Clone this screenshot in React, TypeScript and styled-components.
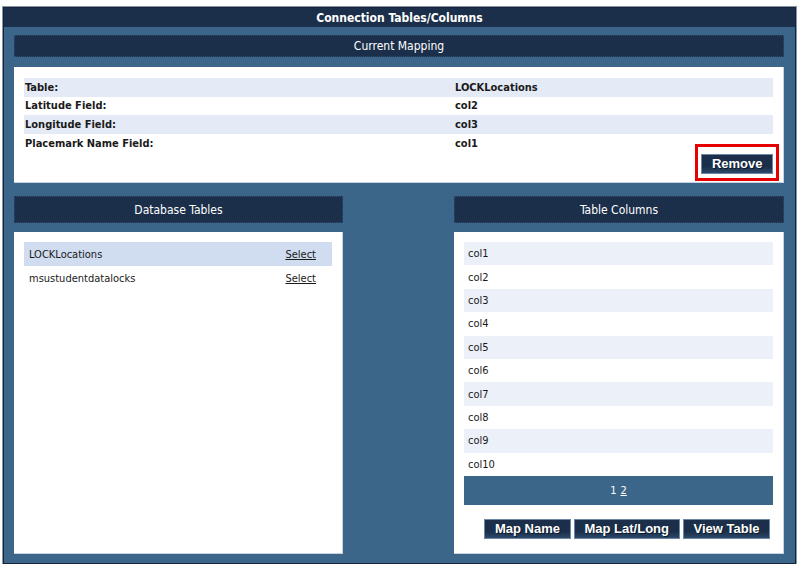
import styled, { createGlobalStyle } from "styled-components";

const GlobalStyle = createGlobalStyle`
    body {
        margin: 0;
        background: #ffffff;
        font-family: "DejaVu Sans Condensed", "DejaVu Sans", sans-serif;
    }
`;

const navy = "#1b2f4a";
const steel = "#3b6689";

const Window = styled.div`
    margin: 7px 0 0 3px;
    width: 793px;
    height: 557px;
    box-sizing: border-box;
    border: 1px solid #14243a;
    box-shadow: 0 0 0 1px #8a96a4;
    background: ${steel};
    display: flex;
    flex-direction: column;
`;

const TitleBar = styled.div`
    height: 19px;
    background: ${navy};
    color: #fff;
    font-weight: bold;
    font-size: 12px;
    display: flex;
    align-items: center;
    justify-content: center;
`;

const Body = styled.div`
    flex: 1;
    padding: 8px 11px 0 10px;
    display: flex;
    flex-direction: column;
`;

const Header = styled.div<{ $h?: number }>`
    height: ${({ $h }) => $h ?? 22}px;
    box-sizing: border-box;
    background: ${navy};
    border: 1px dotted #2f4d6e;
    color: #fff;
    font-size: 12px;
    display: flex;
    align-items: center;
    justify-content: center;
`;

const Panel = styled.div`
    background: #fff;
    box-sizing: border-box;
    padding: 10px;
    border-right: 1px solid #c7d3e0;
    border-bottom: 1px solid #c7d3e0;
`;

const MappingPanel = styled(Panel)`
    margin-top: 10px;
    height: 116px;
    padding-top: 11px;
`;

const MapRow = styled.div<{ $alt?: boolean }>`
    height: 18.6px;
    display: flex;
    align-items: center;
    background: ${({ $alt }) => ($alt ? "#e4eaf6" : "#fff")};
    font-size: 11px;
    font-weight: bold;
    color: #1a1a1a;
`;

const MapLabel = styled.span`
    width: 430px;
    padding-left: 1px;
`;

const RemoveRow = styled.div`
    display: flex;
    justify-content: flex-end;
    margin: -8px -6px 0 0;
`;

const Highlight = styled.div`
    border: 3px solid #e60000;
    padding: 6px 3px 4px 3px;
`;

const Button = styled.button`
    height: 20px;
    box-sizing: border-box;
    padding: 0 9.5px;
    background: linear-gradient(to bottom, ${navy} 0%, ${navy} 65%, #2c4868 100%);
    border: 1px solid #6d88a6;
    color: #fff;
    font-family: "Liberation Sans", Arial, sans-serif;
    font-weight: bold;
    font-size: 13px;
    line-height: 18px;
    text-shadow: 1px 1px 0 #0d1a2a;
    cursor: pointer;
`;

const Columns = styled.div`
    margin-top: 13px;
    display: grid;
    grid-template-columns: 329px 1fr 330px;
    flex: 1;
    padding-bottom: 9px;
`;

const Column = styled.div<{ $col: number }>`
    grid-column: ${({ $col }) => $col};
    display: flex;
    flex-direction: column;
`;

const ListPanel = styled(Panel)`
    margin-top: 9px;
    flex: 1;
`;

const TableRow = styled.div<{ $sel?: boolean }>`
    height: 24px;
    display: flex;
    align-items: center;
    padding: 0 16px 0 5px;
    background: ${({ $sel }) => ($sel ? "#d0dcef" : "#fff")};
    font-size: 11px;
    color: #1a1a1a;
`;

const TableName = styled.span`
    flex: 1;
`;

const SelectLink = styled.a`
    color: #1a1a1a;
    text-decoration: underline;
    cursor: pointer;
`;

const ColRow = styled.div<{ $alt?: boolean }>`
    height: 23.4px;
    display: flex;
    align-items: center;
    padding-left: 4px;
    background: ${({ $alt }) => ($alt ? "#ebf0f9" : "#fff")};
    font-size: 11px;
    color: #1a1a1a;
`;

const Pager = styled.div`
    height: 29px;
    background: ${steel};
    color: #fff;
    font-size: 11px;
    display: flex;
    align-items: center;
    justify-content: center;
    gap: 4px;
`;

const PageLink = styled.a`
    color: #fff;
    text-decoration: underline;
    cursor: pointer;
`;

const ButtonBar = styled.div`
    margin-top: 14px;
    display: flex;
    justify-content: flex-end;
    gap: 3.5px;
    padding-right: 3px;
`;

const mapping = [
    { label: "Table:", value: "LOCKLocations" },
    { label: "Latitude Field:", value: "col2" },
    { label: "Longitude Field:", value: "col3" },
    { label: "Placemark Name Field:", value: "col1" },
];

const tables = ["LOCKLocations", "msustudentdatalocks"];

const columns = Array.from({ length: 10 }, (_, i) => `col${i + 1}`);

export default function App() {
    return (
        <>
            <GlobalStyle />
            <Window>
                <TitleBar>Connection Tables/Columns</TitleBar>
                <Body>
                    <Header>Current Mapping</Header>
                    <MappingPanel>
                        {mapping.map((m, i) => (
                            <MapRow key={m.label} $alt={i % 2 === 0}>
                                <MapLabel>{m.label}</MapLabel>
                                <span>{m.value}</span>
                            </MapRow>
                        ))}
                        <RemoveRow>
                            <Highlight>
                                <Button>Remove</Button>
                            </Highlight>
                        </RemoveRow>
                    </MappingPanel>

                    <Columns>
                        <Column $col={1}>
                            <Header $h={27}>Database Tables</Header>
                            <ListPanel>
                                {tables.map((t, i) => (
                                    <TableRow key={t} $sel={i === 0}>
                                        <TableName>{t}</TableName>
                                        <SelectLink>Select</SelectLink>
                                    </TableRow>
                                ))}
                            </ListPanel>
                        </Column>
                        <Column $col={3}>
                            <Header $h={27}>Table Columns</Header>
                            <ListPanel>
                                {columns.map((c, i) => (
                                    <ColRow key={c} $alt={i % 2 === 0}>
                                        {c}
                                    </ColRow>
                                ))}
                                <Pager>
                                    <span>1</span>
                                    <PageLink>2</PageLink>
                                </Pager>
                                <ButtonBar>
                                    <Button>Map Name</Button>
                                    <Button>Map Lat/Long</Button>
                                    <Button>View Table</Button>
                                </ButtonBar>
                            </ListPanel>
                        </Column>
                    </Columns>
                </Body>
            </Window>
        </>
    );
}
